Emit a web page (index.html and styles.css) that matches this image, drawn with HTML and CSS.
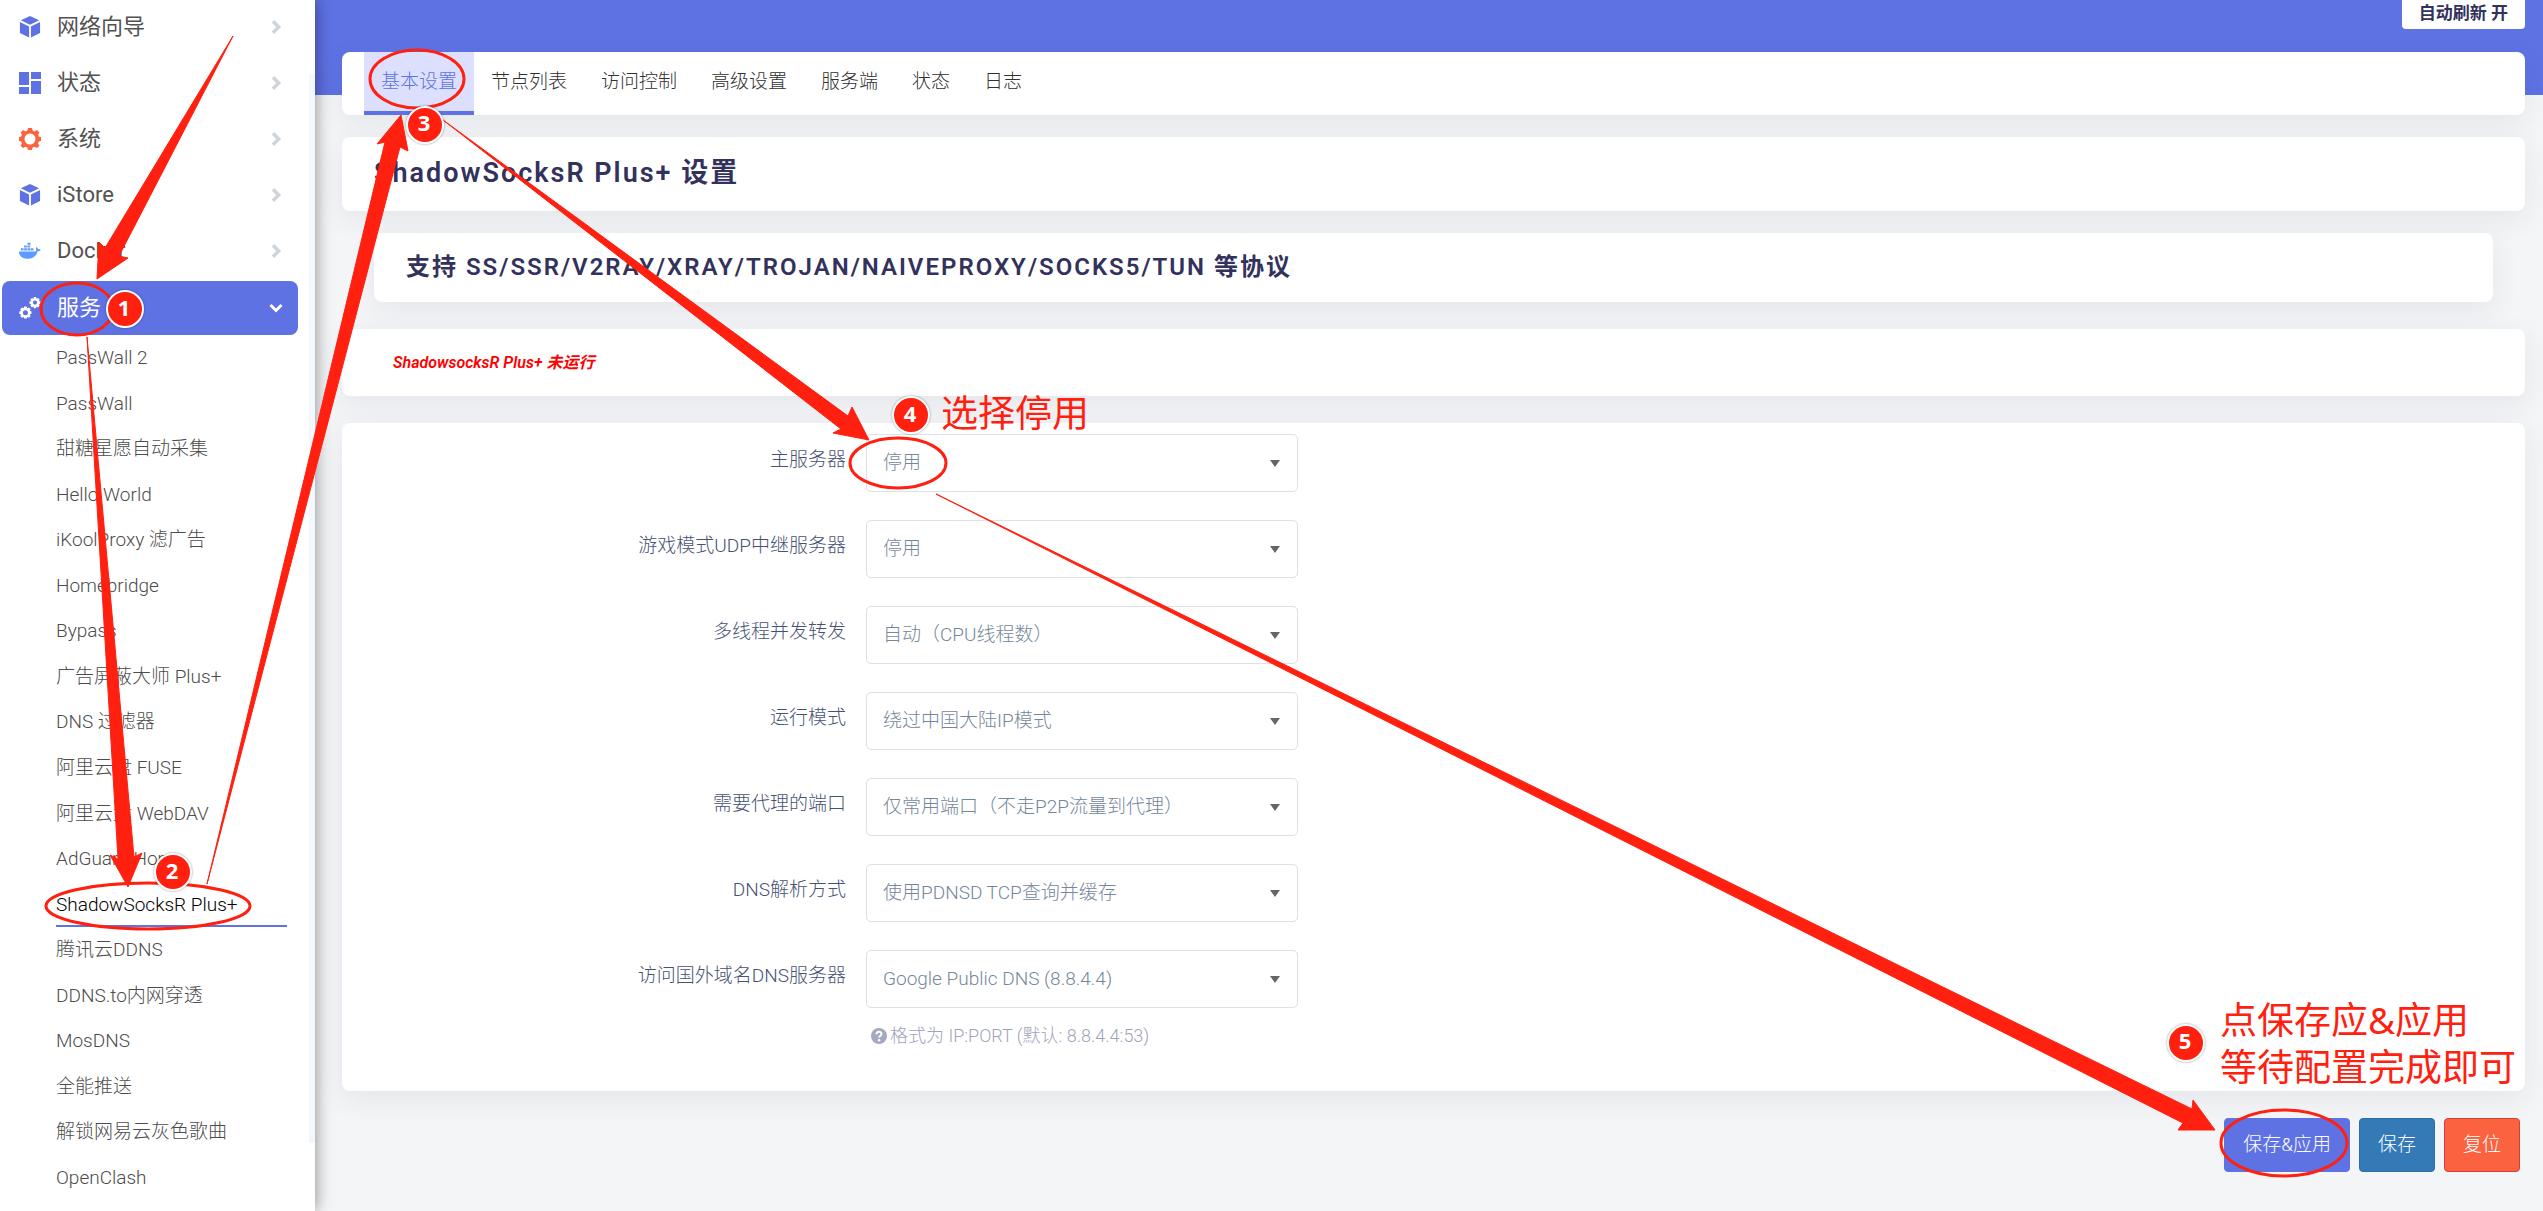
FILE: index.html
```html
<!DOCTYPE html>
<html lang="zh-CN">
<head>
<meta charset="utf-8">
<meta name="viewport" content="width=device-width, initial-scale=1">
<title>ShadowSocksR Plus+ 设置</title>
<link rel="stylesheet" href="styles.css">
</head>
<body>
<svg class="defs" aria-hidden="true">
  <symbol id="i-cube" viewBox="0 0 22 24"><path d="M11 0 21 4.500 11 9.500 1 4.500Z"/><path d="M0 6.500 10 11.500V23.500L0 18.500Z"/><path d="M22 6.500 12 11.500V23.500L22 18.500Z"/></symbol>
  <symbol id="i-grid" viewBox="0 0 22 22"><path d="M0 0H10V13H0ZM12 0H22V7H12ZM0 15H10V22H0ZM12 9H22V22H12Z"/></symbol>
  <symbol id="i-gear" viewBox="0 0 22 22"><path fill-rule="evenodd" d="M9 0h4l.6 2.600 1.800.8L18 2l2.400 2.400-1.200 2.400.7 1.900L22 9v4l-2.200.5-.7 1.900 1.300 2.300L18 20l-2.500-1.300-1.900.8L13 22H9l-.6-2.500-1.900-.8L4 20l-2.400-2.300 1.300-2.300-.7-1.900L0 13V9l2.200-.4.7-1.800L1.600 4.400 4 2l2.600 1.400 1.800-.8ZM11 5.500a5.500 5.500 0 1 0 0 11 5.500 5.500 0 0 0 0-11Z"/></symbol>
  <symbol id="i-docker" viewBox="0 0 24 18"><path d="M0 9.500h17.500c1 0 1.500-.6 1.400-1.600-.6-1-.5-2.300.1-3.400 1.100.6 1.600 1.400 1.800 2.400 1-.2 2.100 0 2.900.6-.6 1.200-1.700 1.800-3.200 1.800-1.800 5.500-5.400 8.200-10.800 8.200C3.300 17.500 0 14.500 0 9.500Z"/><path d="M2 6h3v2.500H2ZM5.600 6h3v2.500h-3ZM9.200 6h3v2.500h-3ZM12.800 6h3v2.500h-3ZM5.600 3h3v2.300h-3ZM9.200 3h3v2.300h-3ZM9.200 0h3.400v2.300H9.200Z"/></symbol>
  <symbol id="i-cogs" viewBox="0 0 22 22"><path fill-rule="evenodd" d="M5.200 9.500h2.600l.4 1.700 1.700-.8 1.700 1.700-.8 1.700 1.700.6v2.400l-1.700.5.8 1.800-1.700 1.600-1.700-.8-.5 1.700H5.200l-.5-1.700-1.800.8-1.600-1.700.8-1.700L.3 17v-2.500l1.700-.6-.8-1.700 1.700-1.700 1.800.8ZM6.400 13.300a2.500 2.500 0 1 0 0 5 2.500 2.500 0 0 0 0-5Z"/><path fill-rule="evenodd" d="M15 0h2l.5 1.700L19 .9l1.600 1.500-.7 1.500 1.600.6v2.200l-1.600.6.7 1.500L19 10.400l-1.500-.8L17 11.200h-2l-.6-1.600-1.500.8-1.500-1.600.7-1.500-1.600-.6V4.500l1.600-.6-.7-1.500L12.900.9l1.500.8ZM16 3.500a2.100 2.100 0 1 0 0 4.200 2.100 2.100 0 0 0 0-4.200Z"/></symbol>
  <symbol id="i-right" viewBox="0 0 10 16"><path d="M1.500 1.500 8 8 1.500 14.500" fill="none" stroke="currentColor" stroke-width="4"/></symbol>
  <symbol id="i-down" viewBox="0 0 14 10"><path d="M1.500 2 7 7.500 12.500 2" fill="none" stroke="currentColor" stroke-width="3"/></symbol>
  <symbol id="i-help" viewBox="0 0 16 16"><circle cx="8" cy="8" r="8"/><path d="M5.400 6.300C5.500 2.900 10.600 3 10.500 6c0 1.700-2.400 1.700-2.400 3.600" fill="none" stroke="#fff" stroke-width="2"/><circle cx="8.100" cy="12.200" r="1.300" fill="#fff"/></symbol>
</svg>

<div class="layout">
  <aside class="sidebar">
    <nav>
      <a class="menu" href="#"><svg class="icon"><use href="#i-cube"/></svg><span>网络向导</span><svg class="chevron"><use href="#i-right"/></svg></a>
      <a class="menu" href="#"><svg class="icon"><use href="#i-grid"/></svg><span>状态</span><svg class="chevron"><use href="#i-right"/></svg></a>
      <a class="menu" href="#"><svg class="icon orange"><use href="#i-gear"/></svg><span>系统</span><svg class="chevron"><use href="#i-right"/></svg></a>
      <a class="menu" href="#"><svg class="icon"><use href="#i-cube"/></svg><span>iStore</span><svg class="chevron"><use href="#i-right"/></svg></a>
      <a class="menu" href="#"><svg class="icon sky"><use href="#i-docker"/></svg><span>Docker</span><svg class="chevron"><use href="#i-right"/></svg></a>
      <a class="menu open" href="#"><svg class="icon"><use href="#i-cogs"/></svg><span>服务</span><svg class="chevron"><use href="#i-down"/></svg></a>
      <ul class="submenu">
        <li><a href="#">PassWall 2</a></li>
        <li><a href="#">PassWall</a></li>
        <li><a href="#">甜糖星愿自动采集</a></li>
        <li><a href="#">Hello World</a></li>
        <li><a href="#">iKoolProxy 滤广告</a></li>
        <li><a href="#">Homebridge</a></li>
        <li><a href="#">Bypass</a></li>
        <li><a href="#">广告屏蔽大师 Plus+</a></li>
        <li><a href="#">DNS 过滤器</a></li>
        <li><a href="#">阿里云盘 FUSE</a></li>
        <li><a href="#">阿里云盘 WebDAV</a></li>
        <li><a href="#">AdGuard Home</a></li>
        <li><a class="active" href="#">ShadowSocksR Plus+</a></li>
        <li><a href="#">腾讯云DDNS</a></li>
        <li><a href="#">DDNS.to内网穿透</a></li>
        <li><a href="#">MosDNS</a></li>
        <li><a href="#">全能推送</a></li>
        <li><a href="#">解锁网易云灰色歌曲</a></li>
        <li><a href="#">OpenClash</a></li>
      </ul>
    </nav>
    <div class="thumb"></div>
  </aside>

  <main class="main">
    <header class="topbar"><button class="refresh" type="button">自动刷新 开</button></header>
    <nav class="tabs card">
      <a class="active" href="#">基本设置</a>
      <a href="#">节点列表</a>
      <a href="#">访问控制</a>
      <a href="#">高级设置</a>
      <a href="#">服务端</a>
      <a href="#">状态</a>
      <a href="#">日志</a>
    </nav>
    <h2 class="card title">ShadowSocksR Plus+ 设置</h2>
    <h3 class="card subtitle">支持 SS/SSR/V2RAY/XRAY/TROJAN/NAIVEPROXY/SOCKS5/TUN 等协议</h3>
    <section class="card status"><em>ShadowsocksR Plus+ 未运行</em></section>
    <form>
      <section class="card fields">
        <div class="row"><label for="f1">主服务器</label><div class="select"><select id="f1"><option>停用</option></select></div></div>
        <div class="row"><label for="f2">游戏模式UDP中继服务器</label><div class="select"><select id="f2"><option>停用</option></select></div></div>
        <div class="row"><label for="f3">多线程并发转发</label><div class="select"><select id="f3"><option>自动（CPU线程数）</option></select></div></div>
        <div class="row"><label for="f4">运行模式</label><div class="select"><select id="f4"><option>绕过中国大陆IP模式</option></select></div></div>
        <div class="row"><label for="f5">需要代理的端口</label><div class="select"><select id="f5"><option>仅常用端口（不走P2P流量到代理）</option></select></div></div>
        <div class="row"><label for="f6">DNS解析方式</label><div class="select"><select id="f6"><option>使用PDNSD TCP查询并缓存</option></select></div></div>
        <div class="row"><label for="f7">访问国外域名DNS服务器</label><div class="select"><select id="f7"><option>Google Public DNS (8.8.4.4)</option></select></div>
          <p class="hint"><svg><use href="#i-help"/></svg>格式为 IP:PORT (默认: 8.8.4.4:53)</p></div>
      </section>
      <div class="actions">
        <button class="apply" type="button">保存&amp;应用</button>
        <button class="save" type="button">保存</button>
        <button class="reset" type="reset">复位</button>
      </div>
    </form>
  </main>
</div>

<svg class="notes">
  <g class="fill">
    <path d="M233 36 105 248 99 242 97 279 128 258 119 256Z"/>
    <path d="M87 337 118 859 110 855 128 887 142 853 134 857Z"/>
    <path d="M207 884 385 142 377 144 401 115 408 151 400 147Z"/>
    <path d="M443 120 841 429 833 433 869 440 852 407 848 416Z"/>
    <path d="M936 494 2183 1123 2178 1130 2215 1130 2193 1100 2192 1109Z"/>
  </g>
  <g class="ring">
    <ellipse cx="77" cy="309" rx="36" ry="26"/>
    <ellipse cx="148" cy="906" rx="102" ry="23"/>
    <ellipse cx="417" cy="79" rx="47" ry="29"/>
    <ellipse cx="898" cy="463" rx="48" ry="25"/>
    <ellipse cx="2284" cy="1143" rx="63" ry="33"/>
  </g>
  <g class="badge">
    <circle cx="125" cy="309" r="18"/><text x="124" y="316">1</text>
    <circle cx="173" cy="872" r="18"/><text x="172" y="879">2</text>
    <circle cx="425" cy="125" r="18"/><text x="424" y="131">3</text>
    <circle cx="911" cy="415" r="18"/><text x="910" y="422">4</text>
    <circle cx="2186" cy="1043" r="18"/><text x="2185" y="1049">5</text>
  </g>
  <g class="callout">
    <text x="941" y="427">选择停用</text>
    <text x="2220" y="1034">点保存应&amp;应用</text>
    <text x="2220" y="1081">等待配置完成即可</text>
  </g>
</svg>
</body>
</html>
```
FILE: styles.css
```css
* { box-sizing: border-box; }
body {
  margin: 0;
  position: relative;
  background: #f4f5f7;
  color: #465273;
  font: 300 19px/28px "Roboto", "Noto Sans CJK SC", sans-serif;
}
a { color: inherit; text-decoration: none; }
button, select { font: inherit; }
.defs { display: none; }

.layout { display: flex; min-height: 100vh; }

.sidebar {
  position: relative;
  z-index: 1;
  flex: 0 0 315px;
  padding: 1px 17px 0 2px;
  background: #fff;
  box-shadow: 0 0 16px rgba(0, 0, 0, .45);
}
.thumb {
  position: absolute;
  top: 74px;
  right: 0;
  width: 6px;
  height: 1069px;
  background: #f3f8fc;
}
.menu {
  display: flex;
  align-items: center;
  height: 54px;
  margin-bottom: 2px;
  padding: 0 15px 2px 17px;
  border-radius: 8px;
  color: #525252;
  font-size: 22px;
  font-weight: 400;
}
.menu span { flex: 1; margin-left: 16px; }
.menu.open { margin-bottom: 0; padding-bottom: 0; background: #5e72e4; color: #fff; }
.icon { width: 22px; height: 22px; fill: #5e72e4; }
.open .icon { fill: #fff; }
.orange { fill: #fb6340; }
.sky { fill: #5e9bff; }
.chevron { width: 14px; height: 14px; color: #ced4da; }
.open .chevron { color: #fff; }

.submenu {
  display: grid;
  grid-auto-rows: 1fr;
  height: 865px;
  margin: 0;
  padding: 0 11px 0 54px;
  list-style: none;
  color: #4c4c4c;
}
.submenu li { display: grid; }
.submenu a {
  display: flex;
  align-items: center;
  padding-top: 3px;
  border-bottom: 2px solid transparent;
}
.submenu .active { border-color: #5e72e4; color: #000; }

.main {
  flex: 1;
  min-width: 0;
  padding: 0 18px 38px 27px;
  background: linear-gradient(#5e72e4, #5e72e4) 0 0 / 100% 95px no-repeat;
}
.topbar { display: flex; justify-content: flex-end; height: 52px; }
.refresh {
  height: 29px;
  padding: 0 17px 4px;
  border: 0;
  border-radius: 0 0 4px 4px;
  background: #fff;
  color: #32325d;
  font-size: 17px;
  font-weight: 700;
  line-height: 24px;
}
.card {
  border-radius: 8px;
  background: #fff;
  box-shadow: 0 8px 28px rgba(40, 50, 80, .08);
}
.tabs { display: flex; height: 63px; padding: 0 22px; color: #303030; }
.tabs a { padding: 16px 17px 0; border-bottom: 4px solid transparent; }
.tabs .active { border-color: #5e72e4; background: #dce0fe; color: #5e72e4; }
.title, .subtitle {
  display: flex;
  align-items: center;
  margin: 22px 0 0;
  padding: 0 32px 2px;
  color: #32325d;
  font-weight: 600;
  letter-spacing: 2px;
}
.title { height: 74px; font-size: 27px; }
.subtitle { height: 69px; margin: 22px 32px 0; font-size: 24px; }
.status {
  display: flex;
  align-items: center;
  height: 67px;
  margin-top: 27px;
  padding: 0 51px;
  color: #f00;
  font-size: 16px;
  font-weight: 600;
}
.fields {
  display: grid;
  gap: 28px;
  margin-top: 27px;
  padding: 11px 0 41px;
}
.row {
  display: grid;
  grid-template-columns: 504px 432px;
  column-gap: 20px;
}
.row label { padding-top: 12px; text-align: right; }
.select { position: relative; }
.select::after {
  content: "";
  position: absolute;
  top: 26px;
  right: 18px;
  border: solid transparent;
  border-width: 7px 5px 0;
  border-top-color: #666;
}
.select select {
  display: block;
  width: 100%;
  height: 58px;
  padding: 0 16px;
  border: 1px solid #dee2e6;
  border-radius: 5px;
  appearance: none;
  background: #fff;
  color: #75879b;
}
.hint {
  grid-column: 2;
  display: flex;
  align-items: center;
  gap: 3px;
  height: 28px;
  margin: 14px 0 0 5px;
  color: #9fa3bb;
  font-size: 18px;
}
.hint svg { width: 16px; height: 16px; fill: #a4a9c0; }
.actions { display: flex; justify-content: flex-end; gap: 9px; margin-top: 27px; padding-right: 5px; }
.actions button {
  height: 54px;
  padding: 0 18px;
  border: 1px solid;
  border-radius: 4px;
  color: #fff;
}
.actions .apply { border-color: #5e72e4; background: #5e72e4; }
.actions .save { border-color: #2e6da4; background: #337ab7; }
.actions .reset { border-color: #d43f3a; background: #fb6340; }

.notes {
  position: absolute;
  top: 0;
  left: 0;
  z-index: 2;
  width: 100%;
  height: 100%;
  pointer-events: none;
}
.fill { fill: #ff2010; stroke: #ff2010; stroke-width: 1px; stroke-linejoin: round; }
.ring { fill: none; stroke: #ff2010; stroke-width: 3px; }
.badge circle {
  fill: #ff2010;
  stroke: #fff;
  stroke-width: 2px;
  filter: drop-shadow(0 0 1px rgba(0, 0, 0, .4));
}
.badge text {
  fill: #fff;
  font: 700 22px "Open Sans", sans-serif;
  text-anchor: middle;
}
.callout { fill: #ff2010; font: 400 37px "Noto Sans", "Noto Sans CJK SC", sans-serif; }
```
